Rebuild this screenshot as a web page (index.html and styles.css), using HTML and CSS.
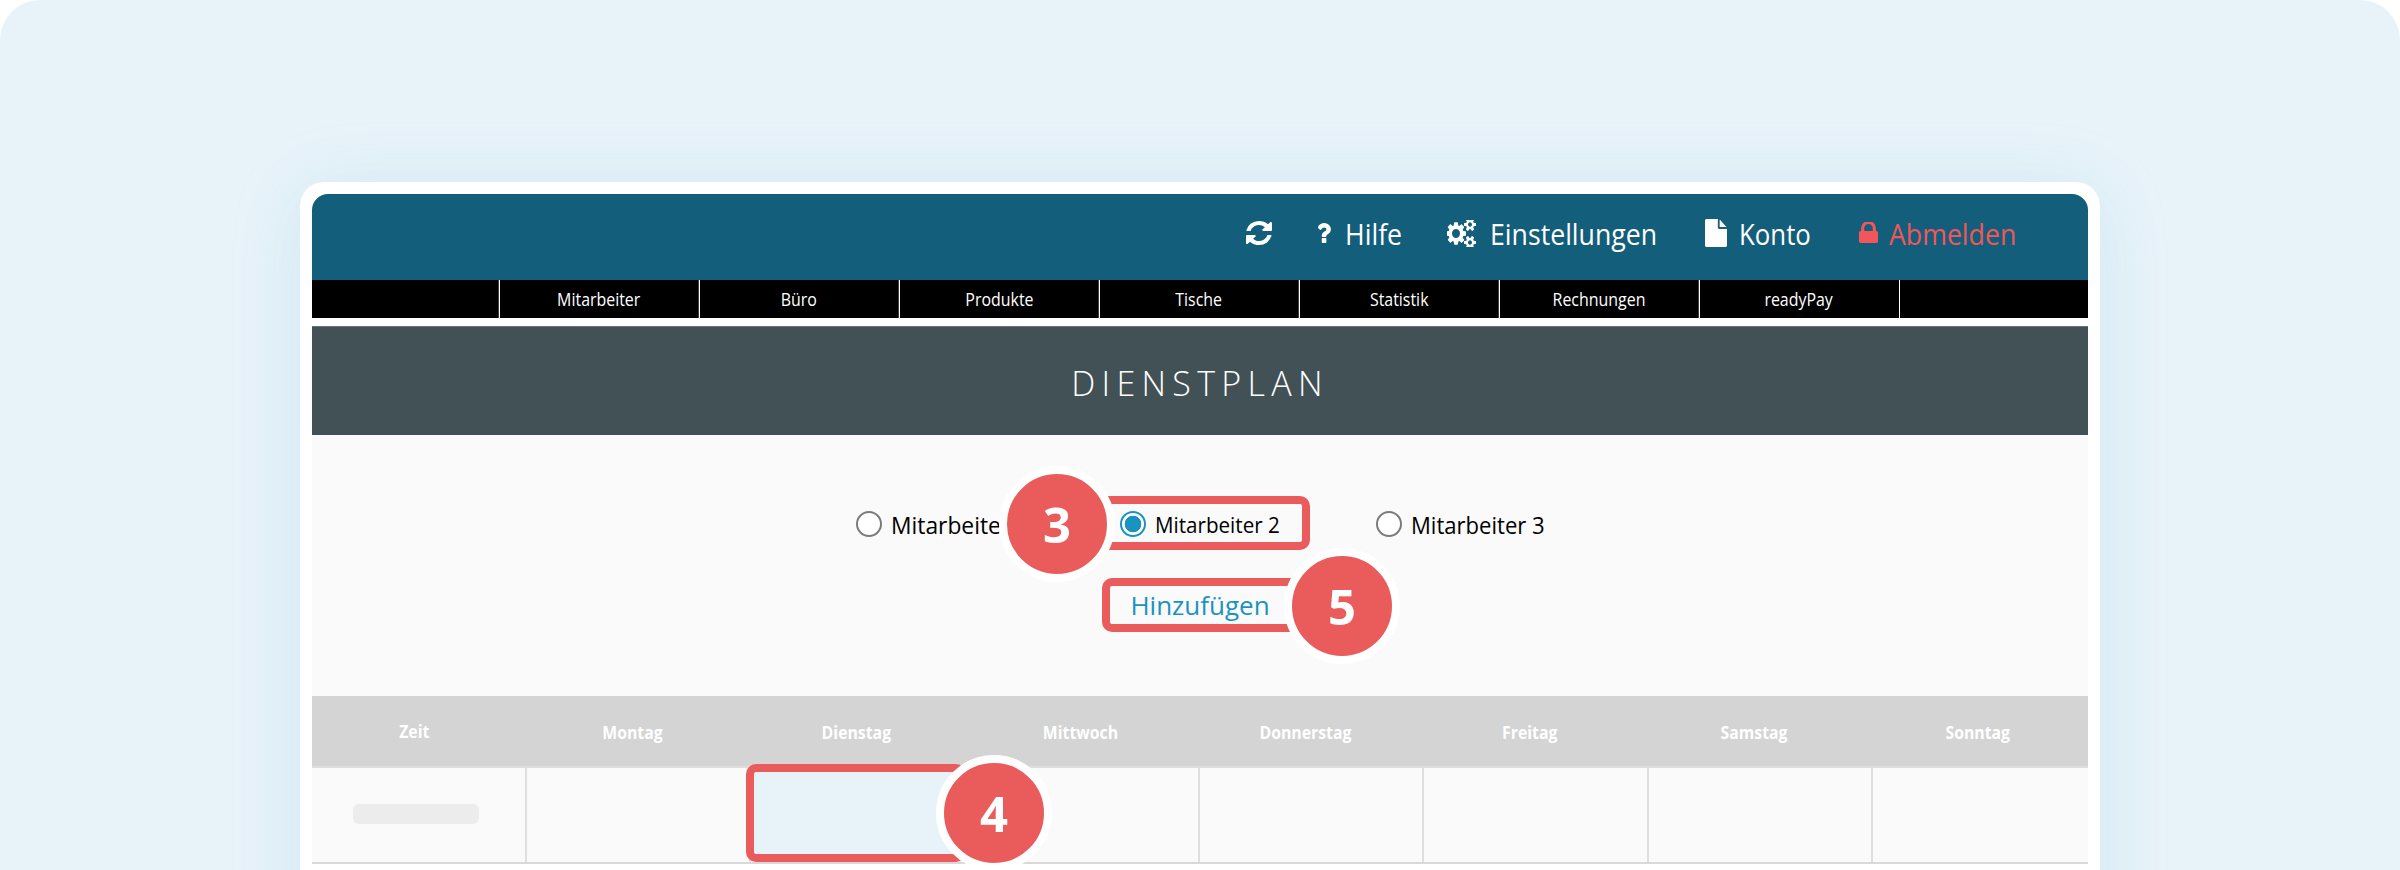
FILE: index.html
```html
<!DOCTYPE html>
<html lang="de">
<head>
<meta charset="utf-8">
<title>Dienstplan</title>
<link rel="stylesheet" href="styles.css">
</head>
<body>
<main class="panel">
  <div class="card">
    <div class="inner">
      <header class="topbar">
        <a class="tool tool-refresh"><svg class="ico ico-refresh" viewBox="128 128 1536 1536" preserveAspectRatio="none"><path d="M1639 1056q0 5-1 7-64 268-268 434.500t-478 166.500q-146 0-282.500-55t-243.500-157l-129 129q-19 19-45 19t-45-19-19-45v-448q0-26 19-45t45-19h448q26 0 45 19t19 45-19 45l-137 137q71 66 161 102t187 36q134 0 250-65t186-179q11-17 53-117 8-23 30-23h192q13 0 22.500 9.500t9.500 22.500zm25-800v448q0 26-19 45t-45 19h-448q-26 0-45-19t-19-45 19-45l138-138q-148-137-349-137-134 0-250 65t-186 179q-11 17-53 117-8 23-30 23h-199q-13 0-22.500-9.500t-9.500-22.500v-7q65-268 270-434.500t480-166.500q146 0 284 55.500t245 156.500l130-129q19-19 45-19t45 19 19 45z"/></svg></a>
        <a class="tool tool-help"><svg class="ico ico-help" viewBox="120 256 910 1280" preserveAspectRatio="none"><path d="M704 1256v240q0 16-12 28t-28 12h-240q-16 0-28-12t-12-28v-240q0-16 12-28t28-12h240q16 0 28 12t12 28zm316-600q0 54-15.500 101t-35 76.500-55 59.500-57.500 43.500-61 35.500q-41 23-68.500 65t-27.500 67q0 17-12 32.500t-28 15.500h-240q-15 0-25.500-18.500t-10.500-37.500v-45q0-83 65-156.500t143-108.500q59-27 84-56t25-76q0-42-46.500-74t-107.500-32q-65 0-108 29-35 25-107 115-13 16-31 16-12 0-25-8l-164-125q-13-10-15.500-25t5.500-28q160-266 464-266 80 0 161 31t146 83 106 127.500 41 158.500z"/></svg><span class="label label-help">Hilfe</span></a>
        <a class="tool tool-settings"><svg class="ico ico-cogs" viewBox="0 128 1920 1536" preserveAspectRatio="none"><path d="M832 896q0-106-75-181t-181-75-181 75-75 181 75 181 181 75 181-75 75-181zm768 512q0-52-38-90t-90-38-90 38-38 90q0 53 37.500 90.500t90.500 37.500 90.500-37.500 37.500-90.500zm0-1024q0-52-38-90t-90-38-90 38-38 90q0 53 37.500 90.500t90.500 37.500 90.500-37.500 37.500-90.500zm-384 421v185q0 10-7 19.500t-16 10.500l-155 24q-11 35-32 76 34 48 90 115 7 11 7 20 0 12-7 19-23 30-82.500 89.500t-78.500 59.500q-11 0-21-7l-115-90q-37 19-77 31-11 108-23 155-7 24-30 24h-186q-11 0-20-7.500t-10-17.500l-23-153q-34-10-75-31l-118 89q-7 7-20 7-11 0-21-8-144-133-144-160 0-9 7-19 10-14 41-53t47-61q-23-44-35-82l-152-24q-10-1-17-9.500t-7-19.500v-185q0-10 7-19.500t16-10.500l155-24q11-35 32-76-34-48-90-115-7-11-7-20 0-12 7-20 22-30 82-89t79-59q11 0 21 7l115 90q34-18 77-32 11-108 23-154 7-24 30-24h186q11 0 20 7.500t10 17.500l23 153q34 10 75 31l118-89q8-7 20-7 11 0 21 8 144 133 144 160 0 8-7 19-12 16-42 54t-45 60q23 48 34 82l152 23q10 2 17 10.500t7 19.500zm640 533v140q0 16-149 31-12 27-30 52 51 113 51 138 0 4-4 7-122 71-124 71-8 0-46-47t-52-68q-20 2-30 2t-30-2q-14 21-52 68t-46 47q-2 0-124-71-4-3-4-7 0-25 51-138-18-25-30-52-149-15-149-31v-140q0-16 149-31 13-29 30-52-51-113-51-138 0-4 4-7 4-2 35-20t59-34 30-16q8 0 46 46.500t52 67.500q20-2 30-2t30 2q51-71 92-112l6-2q4 0 124 70 4 3 4 7 0 25-51 138 17 23 30 52 149 15 149 31zm0-1024v140q0 16-149 31-12 27-30 52 51 113 51 138 0 4-4 7-122 71-124 71-8 0-46-47t-52-68q-20 2-30 2t-30-2q-14 21-52 68t-46 47q-2 0-124-71-4-3-4-7 0-25 51-138-18-25-30-52-149-15-149-31v-140q0-16 149-31 13-29 30-52-51-113-51-138 0-4 4-7 4-2 35-20t59-34 30-16q8 0 46 46.500t52 67.500q20-2 30-2t30 2q51-71 92-112l6-2q4 0 124 70 4 3 4 7 0 25-51 138 17 23 30 52 149 15 149 31z"/></svg><span class="label label-settings">Einstellungen</span></a>
        <a class="tool tool-account"><svg class="ico ico-file" viewBox="0 0 1536 1792" preserveAspectRatio="none"><path d="M1024 512v-472q22 14 36 28l408 408q14 14 28 36h-472zm-128 32q0 40 28 68t68 28h544v1056q0 40-28 68t-68 28h-1344q-40 0-68-28t-28-68v-1600q0-40 28-68t68-28h800v544z"/></svg><span class="label label-account">Konto</span></a>
        <a class="tool tool-logout"><svg class="ico ico-lock" viewBox="0 192 1152 1408" preserveAspectRatio="none"><path d="M320 768h512v-192q0-106-75-181t-181-75-181 75-75 181v192zm832 96v576q0 40-28 68t-68 28h-960q-40 0-68-28t-28-68v-576q0-40 28-68t68-28h32v-192q0-184 132-316t316-132 316 132 132 316v192h32q40 0 68 28t28 68z"/></svg><span class="label label-logout">Abmelden</span></a>
      </header>
      <nav class="mainnav">
        <a class="navitem"><span class="squeeze squeeze-nav">Mitarbeiter</span></a>
        <a class="navitem"><span class="squeeze squeeze-nav">Büro</span></a>
        <a class="navitem"><span class="squeeze squeeze-nav">Produkte</span></a>
        <a class="navitem"><span class="squeeze squeeze-nav">Tische</span></a>
        <a class="navitem"><span class="squeeze squeeze-nav">Statistik</span></a>
        <a class="navitem"><span class="squeeze squeeze-nav">Rechnungen</span></a>
        <a class="navitem"><span class="squeeze squeeze-nav">readyPay</span></a>
      </nav>
      <h1 class="title">DIENSTPLAN</h1>
      <section class="content">
        <div class="choices">
          <label class="choice choice-a"><span class="radio"></span><span class="label label-first">Mitarbeiter 1</span></label>
          <label class="choice choice-b"><span class="radio radio-on"></span><span class="label narrow">Mitarbeiter 2</span></label>
          <label class="choice"><span class="radio"></span><span class="label">Mitarbeiter 3</span></label>
        </div>
        <a class="add">Hinzufügen</a>
      </section>
      <div class="thead">
        <div class="th th-time"><span class="squeeze">Zeit</span></div>
        <div class="th"><span class="squeeze">Montag</span></div>
        <div class="th"><span class="squeeze">Dienstag</span></div>
        <div class="th"><span class="squeeze">Mittwoch</span></div>
        <div class="th"><span class="squeeze">Donnerstag</span></div>
        <div class="th"><span class="squeeze">Freitag</span></div>
        <div class="th"><span class="squeeze">Samstag</span></div>
        <div class="th"><span class="squeeze">Sonntag</span></div>
      </div>
      <div class="trow">
        <div class="td td-time"><span class="placeholder"></span></div>
        <div class="td"></div>
        <div class="td"></div>
        <div class="td"></div>
        <div class="td"></div>
        <div class="td"></div>
        <div class="td"></div>
        <div class="td td-last"></div>
      </div>
    </div>
  </div>

  <div class="mark mark-radio"></div>
  <div class="mark mark-add"></div>
  <div class="mark mark-cell"></div>
  <div class="badge badge-3">3</div>
  <div class="badge badge-5">5</div>
  <div class="badge badge-4">4</div>
</main>
</body>
</html>
```

FILE: styles.css
```css
* { box-sizing: border-box; }

html, body {
  margin: 0;
  height: 870px;
  overflow: hidden;
  background: #fff;
  font-family: "Open Sans", "Liberation Sans", sans-serif;
}

.panel {
  position: relative;
  height: 870px;
  padding-top: 182px;
  background: #e8f3f9;
  border-radius: 40px 40px 0 0;
  overflow: hidden;
}

.card {
  width: 1800px;
  margin: 0 auto;
  padding: 12px 12px 0;
  background: #fff;
  border-radius: 24px 24px 0 0;
  box-shadow: 0 8px 70px rgba(90, 175, 215, 0.18);
  height: 760px;
}

.inner { border-radius: 16px 16px 0 0; overflow: hidden; }

.label {
  display: inline-block;
  white-space: nowrap;
  transform: scaleX(0.92);
  transform-origin: left center;
}
.label-first { transform: scaleX(0.95); }

.squeeze {
  display: inline-block;
  white-space: nowrap;
  transform: scaleX(0.93);
}
.squeeze-nav { transform: scaleX(0.91); }

.topbar {
  height: 86px;
  padding: 0 72px 8px 0;
  display: flex;
  justify-content: flex-end;
  align-items: center;
  background: #135e7a;
  color: #fff;
  font-size: 29px;
}

.tool { display: flex; align-items: center; line-height: 1; }
.tool-refresh { margin-right: 46px; }
.tool-help { margin-right: 47px; }
.tool-settings { margin-right: 48px; }
.tool-account { margin-right: 48px; }
.tool-logout { color: #f0565a; }

.label-help { width: 55px; }
.label-settings { width: 167px; }
.label-account { width: 72px; transform: scaleX(0.89); }
.label-logout { width: 127px; }

.ico { display: block; fill: currentColor; }
.ico-refresh { width: 26px; height: 24px; }
.ico-help { width: 13px; height: 20px; margin-right: 14px; }
.ico-cogs { width: 30px; height: 27px; margin-right: 13px; }
.ico-file { width: 22px; height: 28px; margin-right: 12px; }
.ico-lock { width: 19px; height: 22px; margin-right: 11px; }

.mainnav {
  height: 38px;
  display: flex;
  justify-content: center;
  background: #000;
  padding-right: 2px;
}

.navitem {
  width: 200px;
  display: flex;
  align-items: center;
  justify-content: center;
  border-left: 1px solid #fff;
  box-shadow: -1px 0 0 rgba(255, 255, 255, 0.25);
  color: #fff;
  font-size: 17.5px;
}
.navitem:last-child { border-right: 1px solid #fff; width: 201px; }

.title {
  margin: 8px 0 0;
  height: 109px;
  padding-top: 4px;
  display: flex;
  align-items: center;
  justify-content: center;
  background: #425156;
  border-top: 1px solid #64757a;
  color: #fff;
  font-size: 34px;
  font-weight: 300;
  letter-spacing: 0.185em;
}

.content {
  height: 261px;
  background: #fafafa;
  display: flex;
  flex-direction: column;
  align-items: center;
  padding-top: 70px;
}

.choices {
  display: flex;
  width: 690px;
  margin-left: 2px;
  height: 38px;
  align-items: center;
  color: #000;
  font-size: 24px;
}

.choice { display: flex; align-items: center; white-space: nowrap; flex: none; }
.choice-a { width: 264px; }
.choice-b { width: 256px; }

.radio {
  width: 26px;
  height: 26px;
  margin-right: 9px;
  border: 2.5px solid #7b7b7b;
  border-radius: 50%;
  background: #fff;
  flex: none;
}
.radio-on {
  border-color: #1a93c0;
  background: radial-gradient(circle, #1a93c0 0 8px, #fff 8.6px);
}
.narrow { font-size: 22.4px; }

.add {
  margin-top: 44px;
  color: #1a93c0;
  font-size: 26px;
  line-height: 36px;
}

.thead {
  display: grid;
  grid-template-columns: 208px repeat(7, 224.3px);
  height: 71px;
  background: #d4d4d4;
  border-bottom: 1px solid #dedede;
  padding-top: 2px;
  overflow: hidden;
}

.th {
  display: flex;
  align-items: center;
  justify-content: center;
  color: #fff;
  font-size: 17px;
  font-weight: 700;
}
.th-time { padding-right: 4px; padding-bottom: 2px; }

.trow {
  display: grid;
  grid-template-columns: 215px repeat(6, 224.33px) 215px;
  height: 97px;
  background: #fafafa;
  border-top: 1px solid #dedede;
  border-bottom: 2px solid #d9d9d9;
}

.td { border-right: 2px solid #dedede; }
.td-last { border-right: 0; }
.td-time { padding: 36px 0 0 41px; }

.placeholder {
  display: block;
  width: 126px;
  height: 20px;
  background: #ececec;
  border-radius: 6px;
}

.mark {
  position: absolute;
  border: 8px solid #ea5c5c;
  border-radius: 10px;
}
.mark-radio { left: 1090px; top: 496px; width: 220px; height: 54px; }
.mark-add { left: 1102px; top: 578px; width: 210px; height: 54px; }
.mark-cell { left: 746px; top: 764px; width: 220px; height: 98px; background: #e7f3f9; }

.badge {
  position: absolute;
  width: 116px;
  height: 116px;
  display: flex;
  align-items: center;
  justify-content: center;
  background: #ea5c5c;
  border: 8px solid #fff;
  border-radius: 50%;
  color: #fff;
  font-size: 49px;
  font-weight: 700;
  line-height: 1;
}
.badge-3 { left: 999px; top: 466px; }
.badge-5 { left: 1284px; top: 548px; }
.badge-4 { left: 936px; top: 755px; }
```
